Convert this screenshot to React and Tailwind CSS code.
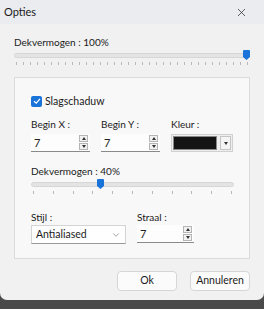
import { X, ChevronDown } from 'lucide-react';

function Spin({ value, width = 'w-[59px]' }) {
  return (
    <div className={`flex h-[18px] ${width} items-center justify-between border-b border-[#8a8a8a] bg-white/70 pl-[3px] pr-[2px]`}>
      <span className="text-[11px] leading-none text-[#222]">{value}</span>
      <div className="flex flex-col gap-px">
        <div className="flex h-[7px] w-[9px] items-center justify-center border border-[#b5b5b5] bg-[#f2f2f2]">
          <div className="h-0 w-0 border-x-[2.5px] border-b-[3px] border-x-transparent border-b-[#333]" />
        </div>
        <div className="flex h-[7px] w-[9px] items-center justify-center border border-[#b5b5b5] bg-[#f2f2f2]">
          <div className="h-0 w-0 border-x-[2.5px] border-t-[3px] border-x-transparent border-t-[#333]" />
        </div>
      </div>
    </div>
  );
}

function Slider({ pos, ticks, width }) {
  return (
    <div className="relative" style={{ width }}>
      <div className="h-[5px] w-full rounded-sm border border-[#d6d6d6] bg-[#e4e4e4]" />
      <div className="mt-[4px] flex justify-between px-[2px]">
        {Array.from({ length: ticks }).map((_, i) => (
          <div key={i} className="h-[3px] w-px bg-[#b8b8b8]" />
        ))}
      </div>
      <div className="absolute top-[-3px] h-[10px] w-[7px] rounded-t-[1px] bg-[#1a73d9] [clip-path:polygon(0_0,100%_0,100%_70%,50%_100%,0_70%)]" style={{ left: pos }} />
    </div>
  );
}

export default function App() {
  return (
    <div className="h-[309px] w-[264px] overflow-hidden bg-[#4a4a4a] font-['Lato',sans-serif] text-[#1b1b1b]">
      <div className="flex h-[300px] flex-col rounded-b-[7px] bg-[#f1f1f1]">
        <div className="flex h-[24px] items-center justify-between bg-[#eaecef] pl-[4px] pr-[16px]">
          <span className="text-[11px]">Opties</span>
          <X size={13} strokeWidth={1.3} className="text-[#222]" />
        </div>
        <div className="px-[14px] pt-[10px]">
          <div className="text-[10px] leading-[16px]">Dekvermogen : 100%</div>
          <div className="mt-[3px]">
            <Slider pos={229} ticks={34} width={236} />
          </div>
          <div className="mt-[12px] flex h-[182px] w-[236px] flex-col border border-[#dcdcdc] bg-[#f8f8f8] px-[16px] pt-[15px]">
            <div className="flex items-center gap-[3px]">
              <div className="flex h-[11px] w-[11px] items-center justify-center rounded-[2px] bg-[#1a73d9]">
                <svg width="8" height="8" viewBox="0 0 8 8">
                  <path d="M1 4.2 L3.2 6.2 L7 1.8" fill="none" stroke="white" strokeWidth="1.2" />
                </svg>
              </div>
              <span className="text-[10.5px] leading-[16px]">Slagschaduw</span>
            </div>
            <div className="mt-[8px] flex gap-[11px]">
              <div>
                <div className="mb-[2px] text-[10px] leading-[15px]">Begin X :</div>
                <Spin value="7" />
              </div>
              <div>
                <div className="mb-[2px] text-[10px] leading-[15px]">Begin Y :</div>
                <Spin value="7" />
              </div>
              <div>
                <div className="mb-[2px] text-[10px] leading-[15px]">Kleur :</div>
                <div className="flex h-[18px] w-[62px] items-center gap-[3px] border border-[#d0d0d0] bg-[#eeeeee] p-[1px]">
                  <div className="h-full w-[45px] border border-[#888] bg-[#141414]" />
                  <div className="flex h-full w-[11px] items-center justify-center border border-[#c5c5c5] bg-[#f4f4f4]">
                    <div className="h-0 w-0 border-x-[2.5px] border-t-[3px] border-x-transparent border-t-[#333]" />
                  </div>
                </div>
              </div>
            </div>
            <div className="mt-[11px] text-[10px] leading-[16px]">Dekvermogen : 40%</div>
            <div className="mt-[3px]">
              <Slider pos={66} ticks={11} width={203} />
            </div>
            <div className="mt-[16px] flex gap-[11px]">
              <div>
                <div className="text-[10px] leading-[15px]">Stijl :</div>
                <div className="flex h-[19px] w-[95px] items-center justify-between border border-[#d4d4d4] border-b-[#9a9a9a] bg-white/80 pl-[4px] pr-[4px]">
                  <span className="text-[10.5px]">Antialiased</span>
                  <ChevronDown size={10} strokeWidth={1.3} className="text-[#555]" />
                </div>
              </div>
              <div>
                <div className="text-[10px] leading-[15px]">Straal :</div>
                <Spin value="7" width="w-[57px]" />
              </div>
            </div>
          </div>
          <div className="mt-[12px] flex justify-end gap-[13px]">
            <button className="h-[20px] w-[60px] rounded-[4px] border border-[#d6d6d6] bg-[#fbfbfb] text-[10.5px]">Ok</button>
            <button className="h-[20px] w-[60px] rounded-[4px] border border-[#d6d6d6] bg-[#fbfbfb] text-[10.5px]">Annuleren</button>
          </div>
        </div>
      </div>
    </div>
  );
}
